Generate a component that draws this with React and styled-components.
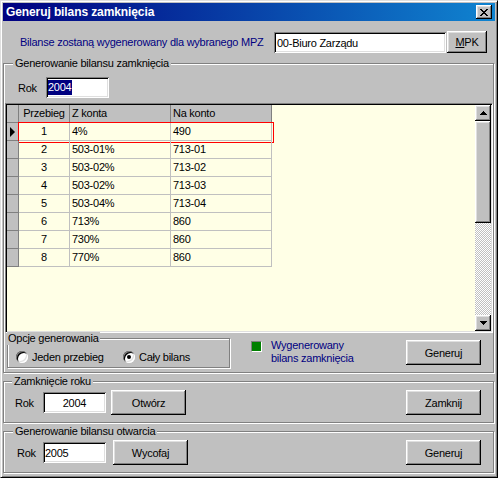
import React from 'react';
import styled, { createGlobalStyle } from 'styled-components';

const rows = [
    [1, '4%', '490'],
    [2, '503-01%', '713-01'],
    [3, '503-02%', '713-02'],
    [4, '503-02%', '713-03'],
    [5, '503-04%', '713-04'],
    [6, '713%', '860'],
    [7, '730%', '860'],
    [8, '770%', '860'],
]

// 8x7 win98 close glyph
const closeGlyph = [
    'XX....XX',
    '.XX..XX.',
    '..XXXX..',
    '...XX...',
    '..XXXX..',
    '.XX..XX.',
    'XX....XX',
]

export default function App() {
    return (
        <>
            <GlobalStyle />
            <Window>
                <TitleBar>
                    <TitleText>Generuj bilans zamknięcia</TitleText>
                    <CloseButton>
                        <svg width="8" height="7" viewBox="0 0 8 7" shapeRendering="crispEdges">
                            {closeGlyph.map((line, y) =>
                                line.split('').map((c, x) =>
                                    c === 'X' ? <rect key={x + '-' + y} x={x} y={y} width="1" height="1" fill="#000" /> : null
                                )
                            )}
                        </svg>
                    </CloseButton>
                </TitleBar>
                <Body>
                    <MpzRow>
                        <InfoLabel>Bilanse zostaną wygenerowany dla wybranego MPZ</InfoLabel>
                        <TextField $w={172} $h={21} $pl={1}>00-Biuro Zarządu</TextField>
                        <Button $w={40} $h={22} $ml={1}><u>M</u>PK</Button>
                    </MpzRow>

                    <GroupBox $w={491} $h={310} $mt={10}>
                        <Legend $x={9}>Generowanie bilansu zamknięcia</Legend>
                        <FieldRow $pt={13} $pl={14}>
                            <FieldLabel $w={28}>Rok</FieldLabel>
                            <TextField $w={63} $h={21}><Selected>2004</Selected></TextField>
                        </FieldRow>

                        <DataGrid>
                            <GridData>
                                <GridRow>
                                    <FixedCell />
                                    <FixedCell $align="center">Przebieg</FixedCell>
                                    <FixedCell>Z konta</FixedCell>
                                    <FixedCell>Na konto</FixedCell>
                                </GridRow>
                                {rows.map((r, i) => (
                                    <GridRow key={r[0]} $selected={i === 0}>
                                        <FixedCell $align="center">{i === 0 && <RowPointer />}</FixedCell>
                                        <Cell $align="center">{r[0]}</Cell>
                                        <Cell>{r[1]}</Cell>
                                        <Cell>{r[2]}</Cell>
                                    </GridRow>
                                ))}
                            </GridData>
                            <ScrollBar>
                                <ScrollButton>
                                    <svg width="7" height="4" viewBox="0 0 7 4" shapeRendering="crispEdges">
                                        <path d="M3 0h1v1h1v1h1v1h1v1H0V3h1V2h1V1h1z" fill="#000" />
                                    </svg>
                                </ScrollButton>
                                <ScrollThumb />
                                <ScrollTrack />
                                <ScrollButton>
                                    <svg width="7" height="4" viewBox="0 0 7 4" shapeRendering="crispEdges">
                                        <path d="M0 0h7v1H6v1H5v1H4v1H3V3H2V2H1V1H0z" fill="#000" />
                                    </svg>
                                </ScrollButton>
                            </ScrollBar>
                        </DataGrid>

                        <BottomBar>
                            <GroupBox $w={223} $h={30} $ml={3}>
                                <Legend $x={-1} $pad={1}>Opcje generowania</Legend>
                                <RadioRow>
                                    <RadioOption $w={107}>
                                        <RadioCircle />
                                        <span>Jeden przebieg</span>
                                    </RadioOption>
                                    <RadioOption>
                                        <RadioCircle $checked />
                                        <span>Cały bilans</span>
                                    </RadioOption>
                                </RadioRow>
                            </GroupBox>
                            <StatusBlock>
                                <StatusSquare />
                                <StatusText>Wygenerowany<br />bilans zamknięcia</StatusText>
                            </StatusBlock>
                            <Button $w={75} $h={25} $ml="auto" $mt={2}>Generuj</Button>
                        </BottomBar>
                    </GroupBox>

                    <GroupBox $w={491} $h={42} $mt={8}>
                        <Legend $x={8}>Zamknięcie roku</Legend>
                        <FieldRow $pt={8} $pl={11} $pr={12}>
                            <FieldLabel $w={28}>Rok</FieldLabel>
                            <TextField $w={63} $h={21} $align="center">2004</TextField>
                            <Button $w={75} $h={25} $ml={5}>Otwórz</Button>
                            <Button $w={75} $h={25} $ml="auto">Zamknij</Button>
                        </FieldRow>
                    </GroupBox>

                    <GroupBox $w={491} $h={42} $mt={8}>
                        <Legend $x={9}>Generowanie bilansu otwarcia</Legend>
                        <FieldRow $pt={8} $pl={13} $pr={12}>
                            <FieldLabel $w={26}>Rok</FieldLabel>
                            <TextField $w={63} $h={21}>2005</TextField>
                            <Button $w={75} $h={25} $ml={7}>Wycofaj</Button>
                            <Button $w={75} $h={25} $ml="auto">Generuj</Button>
                        </FieldRow>
                    </GroupBox>
                </Body>
            </Window>
        </>
    )
}

const px = (v) => (typeof v === 'number' ? v + 'px' : v)

const GlobalStyle = createGlobalStyle`
html, body {
    margin: 0;
    padding: 0;
    background: #c0c0c0;
}
body {
    font-family: "Liberation Sans", Arial, sans-serif;
    font-size: 11px;
    letter-spacing: -0.25px;
    color: #000000;
}
* {
    box-sizing: border-box;
}
`
const raised = `
background: #c0c0c0;
box-shadow: inset -1px -1px #000000, inset 1px 1px #ffffff, inset -2px -2px #808080, inset 2px 2px #dfdfdf;
`
const sunken = `
box-shadow: inset 1px 1px #808080, inset -1px -1px #ffffff, inset 2px 2px #000000, inset -2px -2px #dfdfdf;
`
const Window = styled.div`
width: 498px;
height: 478px;
background: #c0c0c0;
border: 1px solid;
border-color: #dfdfdf #000000 #000000 #dfdfdf;
box-shadow: inset 1px 1px #ffffff, inset -1px -1px #808080;
padding: 2px;
display: flex;
flex-direction: column;
overflow: hidden;
`
const TitleBar = styled.div`
height: 18px;
flex-shrink: 0;
display: flex;
align-items: center;
padding: 0 3px;
background: linear-gradient(90deg, #000080, #1084d0);
`
const TitleText = styled.div`
flex: 1;
color: #ffffff;
font-weight: bold;
font-size: 12px;
letter-spacing: -0.1px;
white-space: nowrap;
`
const CloseButton = styled.div`
width: 16px;
height: 14px;
display: flex;
align-items: center;
justify-content: center;
${raised}
svg { display: block; margin-left: -1px; }
`
const Body = styled.div`
display: flex;
flex-direction: column;
`
const MpzRow = styled.div`
display: flex;
align-items: flex-end;
height: 22px;
margin-top: 10px;
padding: 0 8px 0 17px;
`
const InfoLabel = styled.div`
flex: 1;
align-self: center;
color: #000080;
white-space: nowrap;
`
const TextField = styled.div`
width: ${p => p.$w}px;
height: ${p => p.$h}px;
flex-shrink: 0;
background: #ffffff;
${sunken}
display: flex;
align-items: center;
justify-content: ${p => (p.$align === 'center' ? 'center' : 'flex-start')};
padding: 0 2px 0 ${p => 2 + (p.$pl || 0)}px;
white-space: nowrap;
`
const Selected = styled.span`
background: #000080;
color: #ffffff;
padding: 1px 1px 1px 0;
line-height: 13px;
`
const Button = styled.button`
width: ${p => p.$w}px;
height: ${p => p.$h}px;
flex-shrink: 0;
margin-left: ${p => px(p.$ml || 0)};
margin-top: ${p => p.$mt || 0}px;
border: none;
padding: 0;
font: inherit;
letter-spacing: inherit;
color: #000000;
display: flex;
align-items: center;
justify-content: center;
${raised}
u { text-decoration: underline; }
`
const GroupBox = styled.div`
position: relative;
flex-shrink: 0;
width: ${p => p.$w}px;
height: ${p => p.$h}px;
margin-top: ${p => p.$mt || 0}px;
margin-left: ${p => p.$ml || 0}px;
border: 1px solid #808080;
box-shadow: inset 1px 1px #ffffff, 1px 1px #ffffff;
display: flex;
flex-direction: column;
`
const Legend = styled.div`
position: absolute;
top: -7px;
left: ${p => p.$x}px;
padding: 0 ${p => (p.$pad ?? 2)}px;
background: #c0c0c0;
line-height: 13px;
white-space: nowrap;
`
const FieldRow = styled.div`
display: flex;
align-items: center;
padding: ${p => p.$pt || 0}px ${p => p.$pr || 0}px 0 ${p => p.$pl || 0}px;
`
const FieldLabel = styled.div`
width: ${p => p.$w}px;
flex-shrink: 0;
`
const DataGrid = styled.div`
width: 488px;
height: 230px;
margin: 5px 0 0 1px;
border: 1px solid;
border-color: #808080 #ffffff #ffffff #808080;
box-shadow: inset 1px 1px #000000, inset -1px -1px #dfdfdf;
padding: 1px;
display: flex;
`
const GridData = styled.div`
flex: 1;
background: #ffffe6;
display: flex;
flex-direction: column;
`
const GridRow = styled.div`
position: relative;
display: grid;
grid-template-columns: 12px 51px 101px 101px;
width: 265px;
height: 18px;
${p => p.$selected && `
&::after {
    content: '';
    position: absolute;
    left: 11px;
    top: -1px;
    width: 254px;
    height: 19px;
    border: 1px solid #ff0000;
    pointer-events: none;
}
`}
`
const Cell = styled.div`
height: 18px;
border-right: 1px solid #c0c0c0;
border-bottom: 1px solid #c0c0c0;
padding: 0 2px;
line-height: 17px;
text-align: ${p => p.$align || 'left'};
white-space: nowrap;
overflow: hidden;
`
const FixedCell = styled(Cell)`
background: #c0c0c0;
border-color: #808080;
display: flex;
align-items: center;
justify-content: ${p => (p.$align === 'center' ? 'center' : 'flex-start')};
`
const RowPointer = styled.span`
width: 0;
height: 0;
border-left: 5px solid #000000;
border-top: 5px solid transparent;
border-bottom: 5px solid transparent;
`
const ScrollBar = styled.div`
width: 16px;
display: flex;
flex-direction: column;
`
const ScrollButton = styled.div`
height: 16px;
display: flex;
align-items: center;
justify-content: center;
${raised}
svg { display: block; }
`
const ScrollThumb = styled.div`
height: 102px;
${raised}
`
const ScrollTrack = styled.div`
flex: 1;
background: repeating-conic-gradient(#c0c0c0 0 25%, #ffffff 0 50%) 0 0 / 2px 2px;
`
const BottomBar = styled.div`
display: flex;
align-items: flex-start;
margin-top: 5px;
padding-right: 12px;
`
const RadioRow = styled.div`
display: flex;
align-items: center;
padding: 12px 0 0 8px;
`
const RadioOption = styled.div`
display: flex;
align-items: center;
gap: 4px;
width: ${p => (p.$w ? p.$w + 'px' : 'auto')};
line-height: 12px;
white-space: nowrap;
`
const RadioCircle = styled.span`
position: relative;
width: 12px;
height: 12px;
flex-shrink: 0;
border-radius: 50%;
background: #ffffff;
box-shadow: inset 1px 1px #808080, inset -1px -1px #ffffff, inset 2px 2px #000000, inset -2px -2px #dfdfdf;
${p => p.$checked && `
&::after {
    content: '';
    position: absolute;
    left: 4px;
    top: 4px;
    width: 4px;
    height: 4px;
    border-radius: 50%;
    background: #000000;
}
`}
`
const StatusBlock = styled.div`
display: flex;
align-items: flex-start;
margin: 1px 0 0 21px;
`
const StatusSquare = styled.div`
width: 11px;
height: 11px;
margin-top: 2px;
background: #008000;
border: 1px solid;
border-color: #808080 #ffffff #ffffff #808080;
`
const StatusText = styled.div`
margin-left: 9px;
color: #000080;
line-height: 13px;
white-space: nowrap;
`
